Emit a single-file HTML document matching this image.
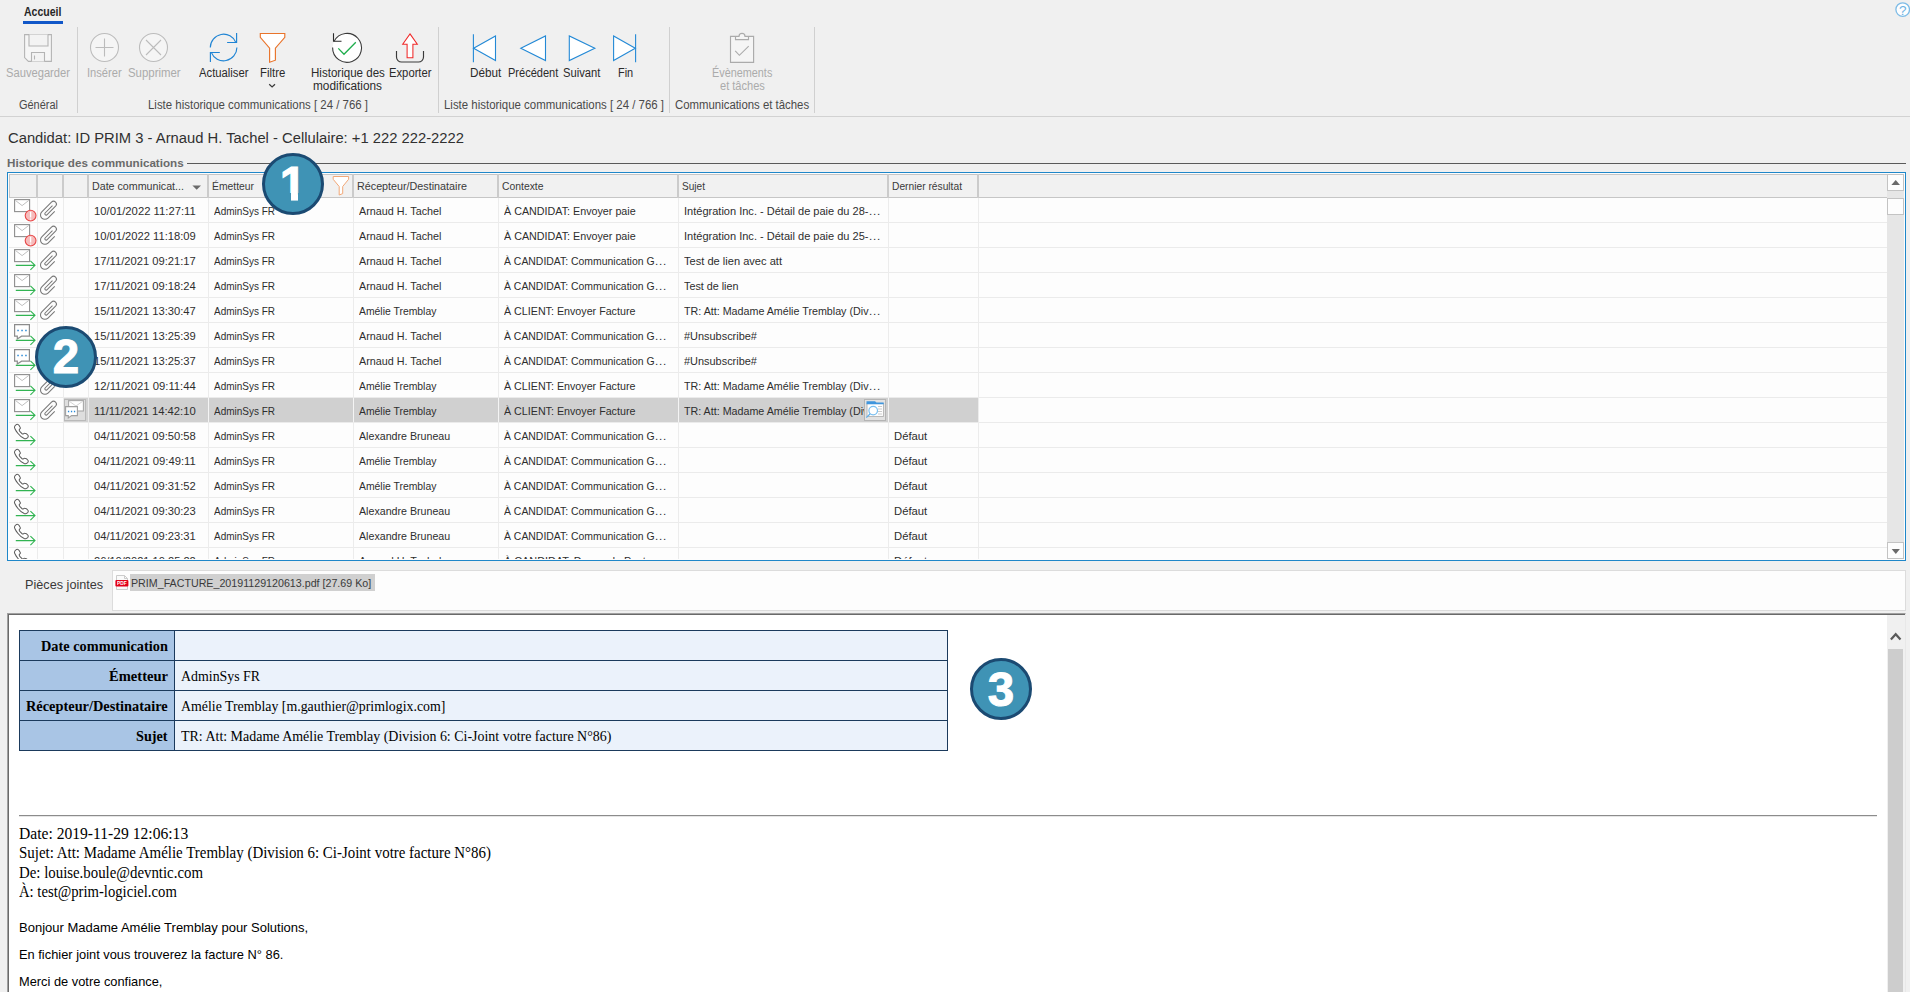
<!DOCTYPE html>
<html lang="fr"><head><meta charset="utf-8"><title>Historique des communications</title>
<style>
html,body{margin:0;padding:0}
body{width:1910px;height:992px;overflow:hidden;background:#f0f0f0;position:relative;font-family:"Liberation Sans",sans-serif}
.a{position:absolute;box-sizing:border-box}
.t{position:absolute;white-space:pre;line-height:normal;transform-origin:0 0}
</style></head><body>
<span class="t" style="left:23.90px;top:5.00px;font-family:'Liberation Sans', sans-serif;font-size:12px;color:#262626;font-weight:bold;transform:scaleX(0.8738);">Accueil</span>
<div class="a" style="left:23px;top:21px;width:40px;height:3px;background:#1157c8;"></div>
<svg class="a" style="left:1890px;top:0px;" width="20" height="20" viewBox="1890 0 20 20" fill="none"><circle cx="1902.7" cy="9.6" r="6.8" stroke="#7dbbe6" stroke-width="1.3" fill="#fdfeff"/></svg>
<span class="t" style="left:1899.04px;top:2.50px;font-family:'Liberation Sans', sans-serif;font-size:13.5px;color:#6db2e2;">?</span>
<div class="a" style="left:0px;top:116px;width:1910px;height:1px;background:#d2d2d2;"></div>
<div class="a" style="left:77px;top:27px;width:1px;height:86px;background:#d0d0d0;"></div>
<div class="a" style="left:438px;top:27px;width:1px;height:86px;background:#d0d0d0;"></div>
<div class="a" style="left:669px;top:27px;width:1px;height:86px;background:#d0d0d0;"></div>
<div class="a" style="left:814px;top:27px;width:1px;height:86px;background:#d0d0d0;"></div>
<svg class="a" style="left:22px;top:32px;" width="32" height="32" viewBox="22 32 32 32" fill="none"><g stroke="#b4b4b4" stroke-width="1.1" fill="#f6f6f6"><path d="M24.6 34.6H51.4V61.4H28.4L24.6 57.6Z"/><path d="M29 34.5V46H48V34.5" fill="#f3f3f3"/><path d="M31.5 61.5V52.5H44.5V61.5" fill="#f3f3f3"/><path d="M34.5 55.5V59.5"/></g></svg>
<span class="t" style="left:6.10px;top:66.00px;font-family:'Liberation Sans', sans-serif;font-size:12px;color:#ababab;transform:scaleX(0.9313);">Sauvegarder</span>
<span class="t" style="left:18.50px;top:98.00px;font-family:'Liberation Sans', sans-serif;font-size:12px;color:#4a4a4a;transform:scaleX(0.9133);">Général</span>
<svg class="a" style="left:88px;top:31px;" width="84" height="34" viewBox="88 31 84 34" fill="none"><g stroke="#bcbcbc" stroke-width="1.1" fill="#f5f5f5"><circle cx="104.5" cy="47.5" r="14"/><path d="M95.5 47.5H113.5M104.5 38.5V56.5"/><circle cx="153.5" cy="47.5" r="14"/><path d="M146 40L161 55M161 40L146 55"/></g></svg>
<span class="t" style="left:87.30px;top:66.00px;font-family:'Liberation Sans', sans-serif;font-size:12px;color:#ababab;transform:scaleX(0.9288);">Insérer</span>
<span class="t" style="left:128.40px;top:66.00px;font-family:'Liberation Sans', sans-serif;font-size:12px;color:#ababab;transform:scaleX(0.9502);">Supprimer</span>
<svg class="a" style="left:207px;top:31px;" width="34" height="34" viewBox="207 31 34 34" fill="none"><g stroke="#1f84d4" stroke-width="1.15"><path d="M210.3 47.5A13.3 13.3 0 0 1 235.96 42.6"/><path d="M236.6 32.9V42.5H227.1"/><path d="M236.9 47.5A13.3 13.3 0 0 1 211.24 52.4"/><path d="M210.4 61.9V52.5H219.8"/></g></svg>
<span class="t" style="left:199.30px;top:66.00px;font-family:'Liberation Sans', sans-serif;font-size:12px;color:#2b2b2b;transform:scaleX(0.9395);">Actualiser</span>
<svg class="a" style="left:258px;top:31px;" width="30" height="34" viewBox="258 31 30 34" fill="none"><path d="M260.3 33.5H284.8V37.3L275.4 48.1V60.2L269.6 62.3V48.1L260.3 37.3Z" stroke="#e9742b" stroke-width="1.15" fill="#fff"/></svg>
<span class="t" style="left:260.40px;top:66.00px;font-family:'Liberation Sans', sans-serif;font-size:12px;color:#2b2b2b;transform:scaleX(0.9486);">Filtre</span>
<svg class="a" style="left:267px;top:82px;" width="10" height="8" viewBox="267 82 10 8" fill="none"><path d="M269.2 84.2L272.1 87L275 84.2" stroke="#3a3a3a" stroke-width="1.25"/></svg>
<svg class="a" style="left:329px;top:31px;" width="36" height="34" viewBox="329 31 36 34" fill="none"><circle cx="347.05" cy="47.85" r="14.4" fill="#fff"/><path d="M334.17 41.3A14.45 14.45 0 1 1 332.6 47.6" stroke="#3a3a3a" stroke-width="1.1"/><path d="M333.5 33.3V41.3H341.5" stroke="#2a2a2a" stroke-width="1.1"/><path d="M338.3 48.4L344 54.3L355.8 42.3" stroke="#1fae4d" stroke-width="1.3"/></svg>
<span class="t" style="left:310.55px;top:66.00px;font-family:'Liberation Sans', sans-serif;font-size:12px;color:#2b2b2b;transform:scaleX(0.9633);">Historique des</span>
<span class="t" style="left:312.50px;top:79.00px;font-family:'Liberation Sans', sans-serif;font-size:12px;color:#2b2b2b;transform:scaleX(0.9853);">modifications</span>
<svg class="a" style="left:394px;top:31px;" width="32" height="34" viewBox="394 31 32 34" fill="none"><path d="M396.5 51V57a5 5 0 0 0 5 5h17a5 5 0 0 0 5-5V51" stroke="#3a3a3a" stroke-width="1.15"/><path d="M410 33.9L417.3 44.3H412.9V57.7H407.1V44.3H402.7Z" stroke="#f02828" stroke-width="1.05" fill="#fff"/></svg>
<span class="t" style="left:389.40px;top:66.00px;font-family:'Liberation Sans', sans-serif;font-size:12px;color:#2b2b2b;transform:scaleX(0.9370);">Exporter</span>
<span class="t" style="left:148.00px;top:98.00px;font-family:'Liberation Sans', sans-serif;font-size:12px;color:#4a4a4a;transform:scaleX(0.9532);">Liste historique communications [ 24 / 766 ]</span>
<svg class="a" style="left:470px;top:32px;" width="170" height="32" viewBox="470 32 170 32" fill="none"><g stroke="#2389d6" stroke-width="1.1" fill="#fff"><path d="M473.6 48.2L495.5 35.9V60.6Z"/><path d="M473.4 34.3V62.2"/><path d="M520.8 48.2L545.5 35.9V60.5Z"/><path d="M594.8 48.2L569.3 35.9V60.5Z"/><path d="M635.3 48.2L613.6 35.9V60.6Z"/><path d="M635.6 34.3V62.2"/></g></svg>
<span class="t" style="left:469.50px;top:66.00px;font-family:'Liberation Sans', sans-serif;font-size:12px;color:#2b2b2b;transform:scaleX(0.9772);">Début</span>
<span class="t" style="left:508.30px;top:66.00px;font-family:'Liberation Sans', sans-serif;font-size:12px;color:#2b2b2b;transform:scaleX(0.9195);">Précédent</span>
<span class="t" style="left:563.40px;top:66.00px;font-family:'Liberation Sans', sans-serif;font-size:12px;color:#2b2b2b;transform:scaleX(0.9343);">Suivant</span>
<span class="t" style="left:617.60px;top:66.00px;font-family:'Liberation Sans', sans-serif;font-size:12px;color:#2b2b2b;transform:scaleX(0.9117);">Fin</span>
<span class="t" style="left:444.30px;top:98.00px;font-family:'Liberation Sans', sans-serif;font-size:12px;color:#4a4a4a;transform:scaleX(0.9532);">Liste historique communications [ 24 / 766 ]</span>
<svg class="a" style="left:728px;top:31px;" width="28" height="34" viewBox="728 31 28 34" fill="none"><g stroke="#ababab" stroke-width="1.15" fill="#f5f5f5"><path d="M739 36.4H730.5V62.4H753.6V36.4H745A3 3 0 0 0 739 36.4Z"/><path d="M735.5 36.6V39.6H748.5V36.6" fill="none"/><path d="M735.2 50.9L739.4 55.3L748.7 46.2" fill="none"/></g></svg>
<span class="t" style="left:712.35px;top:66.00px;font-family:'Liberation Sans', sans-serif;font-size:12px;color:#ababab;transform:scaleX(0.9040);">Évènements</span>
<span class="t" style="left:719.55px;top:79.00px;font-family:'Liberation Sans', sans-serif;font-size:12px;color:#ababab;transform:scaleX(0.9219);">et tâches</span>
<span class="t" style="left:675.40px;top:98.00px;font-family:'Liberation Sans', sans-serif;font-size:12px;color:#4a4a4a;transform:scaleX(0.9483);">Communications et tâches</span>
<span class="t" style="left:7.80px;top:128.90px;font-family:'Liberation Sans', sans-serif;font-size:15.2px;color:#303030;transform:scaleX(0.9729);">Candidat: ID PRIM 3 - Arnaud H. Tachel - Cellulaire: +1 222 222-2222</span>
<span class="t" style="left:7.30px;top:155.70px;font-family:'Liberation Sans', sans-serif;font-size:11.6px;color:#6a6a6a;font-weight:bold;transform:scaleX(1.0047);">Historique des communications</span>
<div class="a" style="left:187px;top:163px;width:1719px;height:1px;background:#5a5a5a;"></div>
<div class="a" style="left:7px;top:172px;width:1899px;height:389px;background:#fdfdfd;border:1px solid #1f87c9;"></div>
<div class="a" style="left:9px;top:174px;width:1878px;height:24px;background:#f1f1f1;border:1px solid #c6c6c6;border-right:none;"></div>
<div class="a" style="left:36px;top:174px;width:2px;height:24px;background:#cbcbcb;"></div>
<div class="a" style="left:62px;top:174px;width:2px;height:24px;background:#cbcbcb;"></div>
<div class="a" style="left:87px;top:174px;width:2px;height:24px;background:#cbcbcb;"></div>
<div class="a" style="left:207px;top:174px;width:2px;height:24px;background:#cbcbcb;"></div>
<div class="a" style="left:351.8px;top:174px;width:2px;height:24px;background:#cbcbcb;"></div>
<div class="a" style="left:496.8px;top:174px;width:2px;height:24px;background:#cbcbcb;"></div>
<div class="a" style="left:676.5px;top:174px;width:2px;height:24px;background:#cbcbcb;"></div>
<div class="a" style="left:887px;top:174px;width:2px;height:24px;background:#cbcbcb;"></div>
<div class="a" style="left:977px;top:174px;width:2px;height:24px;background:#cbcbcb;"></div>
<span class="t" style="left:92.40px;top:180.00px;font-family:'Liberation Sans', sans-serif;font-size:11.5px;color:#3a3a3a;transform:scaleX(0.9286);">Date communicat...</span>
<svg class="a" style="left:190px;top:183px;" width="14" height="9" viewBox="190 183 14 9" fill="none"><path d="M192.4 185.4H201L196.7 189.8Z" fill="#6a6a6a"/></svg>
<span class="t" style="left:212.40px;top:180.00px;font-family:'Liberation Sans', sans-serif;font-size:11.5px;color:#3a3a3a;transform:scaleX(0.8999);">Émetteur</span>
<span class="t" style="left:357.00px;top:180.00px;font-family:'Liberation Sans', sans-serif;font-size:11.5px;color:#3a3a3a;transform:scaleX(0.9352);">Récepteur/Destinataire</span>
<span class="t" style="left:501.60px;top:180.00px;font-family:'Liberation Sans', sans-serif;font-size:11.5px;color:#3a3a3a;transform:scaleX(0.9016);">Contexte</span>
<span class="t" style="left:682.30px;top:180.00px;font-family:'Liberation Sans', sans-serif;font-size:11.5px;color:#3a3a3a;transform:scaleX(0.8772);">Sujet</span>
<span class="t" style="left:892.40px;top:180.00px;font-family:'Liberation Sans', sans-serif;font-size:11.5px;color:#3a3a3a;transform:scaleX(0.8903);">Dernier résultat</span>
<svg class="a" style="left:331px;top:175px;" width="20" height="22" viewBox="331 175 20 22" fill="none"><path d="M333.2 176.5H348.6V179.3L342.7 186.5V193.6L339.2 195V186.5L333.2 179.3Z" stroke="#f2a878" stroke-width="1" fill="#fff"/></svg>
<div class="a" style="left:89px;top:398px;width:889px;height:24px;background:#d0d0d0;"></div>
<div class="a" style="left:63px;top:398px;width:25px;height:24px;background:#d3d3d3;"></div>
<div class="a" style="left:9px;top:222px;width:1878px;height:1px;background:#ebebeb;"></div>
<div class="a" style="left:9px;top:247px;width:1878px;height:1px;background:#ebebeb;"></div>
<div class="a" style="left:9px;top:272px;width:1878px;height:1px;background:#ebebeb;"></div>
<div class="a" style="left:9px;top:297px;width:1878px;height:1px;background:#ebebeb;"></div>
<div class="a" style="left:9px;top:322px;width:1878px;height:1px;background:#ebebeb;"></div>
<div class="a" style="left:9px;top:347px;width:1878px;height:1px;background:#ebebeb;"></div>
<div class="a" style="left:9px;top:372px;width:1878px;height:1px;background:#ebebeb;"></div>
<div class="a" style="left:9px;top:397px;width:1878px;height:1px;background:#ebebeb;"></div>
<div class="a" style="left:9px;top:422px;width:1878px;height:1px;background:#ebebeb;"></div>
<div class="a" style="left:9px;top:447px;width:1878px;height:1px;background:#ebebeb;"></div>
<div class="a" style="left:9px;top:472px;width:1878px;height:1px;background:#ebebeb;"></div>
<div class="a" style="left:9px;top:497px;width:1878px;height:1px;background:#ebebeb;"></div>
<div class="a" style="left:9px;top:522px;width:1878px;height:1px;background:#ebebeb;"></div>
<div class="a" style="left:9px;top:547px;width:1878px;height:1px;background:#ebebeb;"></div>
<div class="a" style="left:37px;top:198px;width:1px;height:362px;background:#ececec;"></div>
<div class="a" style="left:63px;top:198px;width:1px;height:362px;background:#ececec;"></div>
<div class="a" style="left:88px;top:198px;width:1px;height:362px;background:#ececec;"></div>
<div class="a" style="left:208px;top:198px;width:1px;height:362px;background:#ececec;"></div>
<div class="a" style="left:353px;top:198px;width:1px;height:362px;background:#ececec;"></div>
<div class="a" style="left:498px;top:198px;width:1px;height:362px;background:#ececec;"></div>
<div class="a" style="left:678px;top:198px;width:1px;height:362px;background:#ececec;"></div>
<div class="a" style="left:888px;top:198px;width:1px;height:362px;background:#ececec;"></div>
<div class="a" style="left:978px;top:198px;width:1px;height:362px;background:#ececec;"></div>
<div class="a" style="left:208px;top:398px;width:1px;height:24px;background:#f4f4f4;"></div>
<div class="a" style="left:353px;top:398px;width:1px;height:24px;background:#f4f4f4;"></div>
<div class="a" style="left:498px;top:398px;width:1px;height:24px;background:#f4f4f4;"></div>
<div class="a" style="left:678px;top:398px;width:1px;height:24px;background:#f4f4f4;"></div>
<div class="a" style="left:888px;top:398px;width:1px;height:24px;background:#f4f4f4;"></div>
<svg class="a" style="left:9px;top:198px;overflow:hidden;" width="80" height="361" viewBox="9 198 80 361" fill="none"><rect x="14.6" y="199.6" width="15" height="12" stroke="#8e8e8e" stroke-width="1.1" fill="#fff"/><path d="M15.4 200.4L22.1 205.6L28.799999999999997 200.4" stroke="#c0c0c0" stroke-width="1"/><circle cx="30.6" cy="215.6" r="5.4" fill="#f6bcbc" stroke="#e84848" stroke-width="1.1"/><path d="M30.6 211.7V217.5M30.6 218.6V219.7" stroke="#fff" stroke-width="1.3"/><g transform="translate(44.9 214.9) rotate(-45)"><path d="M9.5 4.4H0A4.4 4.4 0 0 1 0 -4.4H13.7A2.875 2.875 0 0 1 13.7 1.35H1.5A1.28 1.28 0 0 1 1.5 -1.2H11.9" stroke="#787878" stroke-width="1.05" fill="none"/></g><rect x="14.6" y="224.6" width="15" height="12" stroke="#8e8e8e" stroke-width="1.1" fill="#fff"/><path d="M15.4 225.4L22.1 230.6L28.799999999999997 225.4" stroke="#c0c0c0" stroke-width="1"/><circle cx="30.6" cy="240.6" r="5.4" fill="#f6bcbc" stroke="#e84848" stroke-width="1.1"/><path d="M30.6 236.7V242.5M30.6 243.6V244.7" stroke="#fff" stroke-width="1.3"/><g transform="translate(44.9 239.9) rotate(-45)"><path d="M9.5 4.4H0A4.4 4.4 0 0 1 0 -4.4H13.7A2.875 2.875 0 0 1 13.7 1.35H1.5A1.28 1.28 0 0 1 1.5 -1.2H11.9" stroke="#787878" stroke-width="1.05" fill="none"/></g><rect x="14.6" y="249.6" width="15" height="12" stroke="#8e8e8e" stroke-width="1.1" fill="#fff"/><path d="M15.4 250.4L22.1 255.6L28.799999999999997 250.4" stroke="#c0c0c0" stroke-width="1"/><path d="M15.8 265.35H34.8M30.4 260.85L35 265.35L30.4 269.85" stroke="#31b452" stroke-width="1.1"/><g transform="translate(44.9 264.9) rotate(-45)"><path d="M9.5 4.4H0A4.4 4.4 0 0 1 0 -4.4H13.7A2.875 2.875 0 0 1 13.7 1.35H1.5A1.28 1.28 0 0 1 1.5 -1.2H11.9" stroke="#787878" stroke-width="1.05" fill="none"/></g><rect x="14.6" y="274.6" width="15" height="12" stroke="#8e8e8e" stroke-width="1.1" fill="#fff"/><path d="M15.4 275.40000000000003L22.1 280.6L28.799999999999997 275.40000000000003" stroke="#c0c0c0" stroke-width="1"/><path d="M15.8 290.35H34.8M30.4 285.85L35 290.35L30.4 294.85" stroke="#31b452" stroke-width="1.1"/><g transform="translate(44.9 289.9) rotate(-45)"><path d="M9.5 4.4H0A4.4 4.4 0 0 1 0 -4.4H13.7A2.875 2.875 0 0 1 13.7 1.35H1.5A1.28 1.28 0 0 1 1.5 -1.2H11.9" stroke="#787878" stroke-width="1.05" fill="none"/></g><rect x="14.6" y="299.6" width="15" height="12" stroke="#8e8e8e" stroke-width="1.1" fill="#fff"/><path d="M15.4 300.40000000000003L22.1 305.6L28.799999999999997 300.40000000000003" stroke="#c0c0c0" stroke-width="1"/><path d="M15.8 315.35H34.8M30.4 310.85L35 315.35L30.4 319.85" stroke="#31b452" stroke-width="1.1"/><g transform="translate(44.9 314.9) rotate(-45)"><path d="M9.5 4.4H0A4.4 4.4 0 0 1 0 -4.4H13.7A2.875 2.875 0 0 1 13.7 1.35H1.5A1.28 1.28 0 0 1 1.5 -1.2H11.9" stroke="#787878" stroke-width="1.05" fill="none"/></g><path d="M14.6 324.6H29.4V336.20000000000005H21.6L17.3 339.0V336.20000000000005H14.6Z" stroke="#8c8c8c" stroke-width="1.2" fill="#fff"/><path d="M17.3 330.5h1.5M21.3 330.5h1.5M25.2 330.5h1.5" stroke="#2b8ad8" stroke-width="1.5"/><path d="M15.8 340.35H34.8M30.4 335.85L35 340.35L30.4 344.85" stroke="#31b452" stroke-width="1.1"/><path d="M14.6 349.6H29.4V361.20000000000005H21.6L17.3 364.0V361.20000000000005H14.6Z" stroke="#8c8c8c" stroke-width="1.2" fill="#fff"/><path d="M17.3 355.5h1.5M21.3 355.5h1.5M25.2 355.5h1.5" stroke="#2b8ad8" stroke-width="1.5"/><path d="M15.8 365.35H34.8M30.4 360.85L35 365.35L30.4 369.85" stroke="#31b452" stroke-width="1.1"/><rect x="14.6" y="374.6" width="15" height="12" stroke="#8e8e8e" stroke-width="1.1" fill="#fff"/><path d="M15.4 375.40000000000003L22.1 380.6L28.799999999999997 375.40000000000003" stroke="#c0c0c0" stroke-width="1"/><path d="M15.8 390.35H34.8M30.4 385.85L35 390.35L30.4 394.85" stroke="#31b452" stroke-width="1.1"/><g transform="translate(44.9 389.9) rotate(-45)"><path d="M9.5 4.4H0A4.4 4.4 0 0 1 0 -4.4H13.7A2.875 2.875 0 0 1 13.7 1.35H1.5A1.28 1.28 0 0 1 1.5 -1.2H11.9" stroke="#787878" stroke-width="1.05" fill="none"/></g><rect x="14.6" y="399.6" width="15" height="12" stroke="#8e8e8e" stroke-width="1.1" fill="#fff"/><path d="M15.4 400.40000000000003L22.1 405.6L28.799999999999997 400.40000000000003" stroke="#c0c0c0" stroke-width="1"/><path d="M15.8 415.35H34.8M30.4 410.85L35 415.35L30.4 419.85" stroke="#31b452" stroke-width="1.1"/><g transform="translate(44.9 414.9) rotate(-45)"><path d="M9.5 4.4H0A4.4 4.4 0 0 1 0 -4.4H13.7A2.875 2.875 0 0 1 13.7 1.35H1.5A1.28 1.28 0 0 1 1.5 -1.2H11.9" stroke="#787878" stroke-width="1.05" fill="none"/></g><g transform="translate(0 0)"><path d="M17.3 424.3C18.1 424.3 18.7 424.9 19.1 425.6C19.6 426.5 20.5 427.4 20.4 428.1C20.3 428.7 19.5 428.9 19.3 429.5C19.1 430.2 19.3 430.7 19.8 431.3L22.2 433.8C22.6 434.2 23 434.1 23.4 433.8C23.8 433.4 24.2 433.1 24.8 433.2C25.6 433.3 26.3 433.7 26.9 434.2C27.6 434.8 28.4 435.4 28.3 436.2C28.2 437.3 27.2 438.2 26.2 438.6C25.5 438.9 24.8 438.9 24.2 438.6C22 437.7 19.6 435.6 17.8 433.3C16.6 431.8 15.7 430.4 15.2 429.3C14.7 428.3 14.3 427.6 14.5 426.9C14.7 426 15.2 425.4 15.6 425.1C16.1 424.7 16.6 424.3 17.3 424.3Z" stroke="#5c5c5c" stroke-width="1.05" fill="#fff"/></g><path d="M15.8 440.62H34.8M30.4 436.12L35 440.62L30.4 445.12" stroke="#31b452" stroke-width="1.1"/><g transform="translate(0 25)"><path d="M17.3 424.3C18.1 424.3 18.7 424.9 19.1 425.6C19.6 426.5 20.5 427.4 20.4 428.1C20.3 428.7 19.5 428.9 19.3 429.5C19.1 430.2 19.3 430.7 19.8 431.3L22.2 433.8C22.6 434.2 23 434.1 23.4 433.8C23.8 433.4 24.2 433.1 24.8 433.2C25.6 433.3 26.3 433.7 26.9 434.2C27.6 434.8 28.4 435.4 28.3 436.2C28.2 437.3 27.2 438.2 26.2 438.6C25.5 438.9 24.8 438.9 24.2 438.6C22 437.7 19.6 435.6 17.8 433.3C16.6 431.8 15.7 430.4 15.2 429.3C14.7 428.3 14.3 427.6 14.5 426.9C14.7 426 15.2 425.4 15.6 425.1C16.1 424.7 16.6 424.3 17.3 424.3Z" stroke="#5c5c5c" stroke-width="1.05" fill="#fff"/></g><path d="M15.8 465.62H34.8M30.4 461.12L35 465.62L30.4 470.12" stroke="#31b452" stroke-width="1.1"/><g transform="translate(0 50)"><path d="M17.3 424.3C18.1 424.3 18.7 424.9 19.1 425.6C19.6 426.5 20.5 427.4 20.4 428.1C20.3 428.7 19.5 428.9 19.3 429.5C19.1 430.2 19.3 430.7 19.8 431.3L22.2 433.8C22.6 434.2 23 434.1 23.4 433.8C23.8 433.4 24.2 433.1 24.8 433.2C25.6 433.3 26.3 433.7 26.9 434.2C27.6 434.8 28.4 435.4 28.3 436.2C28.2 437.3 27.2 438.2 26.2 438.6C25.5 438.9 24.8 438.9 24.2 438.6C22 437.7 19.6 435.6 17.8 433.3C16.6 431.8 15.7 430.4 15.2 429.3C14.7 428.3 14.3 427.6 14.5 426.9C14.7 426 15.2 425.4 15.6 425.1C16.1 424.7 16.6 424.3 17.3 424.3Z" stroke="#5c5c5c" stroke-width="1.05" fill="#fff"/></g><path d="M15.8 490.62H34.8M30.4 486.12L35 490.62L30.4 495.12" stroke="#31b452" stroke-width="1.1"/><g transform="translate(0 75)"><path d="M17.3 424.3C18.1 424.3 18.7 424.9 19.1 425.6C19.6 426.5 20.5 427.4 20.4 428.1C20.3 428.7 19.5 428.9 19.3 429.5C19.1 430.2 19.3 430.7 19.8 431.3L22.2 433.8C22.6 434.2 23 434.1 23.4 433.8C23.8 433.4 24.2 433.1 24.8 433.2C25.6 433.3 26.3 433.7 26.9 434.2C27.6 434.8 28.4 435.4 28.3 436.2C28.2 437.3 27.2 438.2 26.2 438.6C25.5 438.9 24.8 438.9 24.2 438.6C22 437.7 19.6 435.6 17.8 433.3C16.6 431.8 15.7 430.4 15.2 429.3C14.7 428.3 14.3 427.6 14.5 426.9C14.7 426 15.2 425.4 15.6 425.1C16.1 424.7 16.6 424.3 17.3 424.3Z" stroke="#5c5c5c" stroke-width="1.05" fill="#fff"/></g><path d="M15.8 515.62H34.8M30.4 511.12L35 515.62L30.4 520.12" stroke="#31b452" stroke-width="1.1"/><g transform="translate(0 100)"><path d="M17.3 424.3C18.1 424.3 18.7 424.9 19.1 425.6C19.6 426.5 20.5 427.4 20.4 428.1C20.3 428.7 19.5 428.9 19.3 429.5C19.1 430.2 19.3 430.7 19.8 431.3L22.2 433.8C22.6 434.2 23 434.1 23.4 433.8C23.8 433.4 24.2 433.1 24.8 433.2C25.6 433.3 26.3 433.7 26.9 434.2C27.6 434.8 28.4 435.4 28.3 436.2C28.2 437.3 27.2 438.2 26.2 438.6C25.5 438.9 24.8 438.9 24.2 438.6C22 437.7 19.6 435.6 17.8 433.3C16.6 431.8 15.7 430.4 15.2 429.3C14.7 428.3 14.3 427.6 14.5 426.9C14.7 426 15.2 425.4 15.6 425.1C16.1 424.7 16.6 424.3 17.3 424.3Z" stroke="#5c5c5c" stroke-width="1.05" fill="#fff"/></g><path d="M15.8 540.62H34.8M30.4 536.12L35 540.62L30.4 545.12" stroke="#31b452" stroke-width="1.1"/><g transform="translate(0 125)"><path d="M17.3 424.3C18.1 424.3 18.7 424.9 19.1 425.6C19.6 426.5 20.5 427.4 20.4 428.1C20.3 428.7 19.5 428.9 19.3 429.5C19.1 430.2 19.3 430.7 19.8 431.3L22.2 433.8C22.6 434.2 23 434.1 23.4 433.8C23.8 433.4 24.2 433.1 24.8 433.2C25.6 433.3 26.3 433.7 26.9 434.2C27.6 434.8 28.4 435.4 28.3 436.2C28.2 437.3 27.2 438.2 26.2 438.6C25.5 438.9 24.8 438.9 24.2 438.6C22 437.7 19.6 435.6 17.8 433.3C16.6 431.8 15.7 430.4 15.2 429.3C14.7 428.3 14.3 427.6 14.5 426.9C14.7 426 15.2 425.4 15.6 425.1C16.1 424.7 16.6 424.3 17.3 424.3Z" stroke="#5c5c5c" stroke-width="1.05" fill="#fff"/></g><path d="M15.8 565.62H34.8M30.4 561.12L35 565.62L30.4 570.12" stroke="#31b452" stroke-width="1.1"/></svg>
<div class="a" style="left:64px;top:399px;width:22px;height:22px;background:#dedede;border:1px solid #b9b9b9;"></div>
<svg class="a" style="left:64px;top:399px;" width="22" height="22" viewBox="64 399 22 22" fill="none"><rect x="68.6" y="400.6" width="14.8" height="10.4" stroke="#a8a8a8" stroke-width="1.1" fill="#fff"/><path d="M69.3 401.3L76 406L82.7 401.3" stroke="#cfcfcf" stroke-width="0.9"/><path d="M65.6 406.6H77.4V415.6H71.6L68.3 418V415.6H65.6Z" stroke="#a0a0a0" stroke-width="1.1" fill="#fff"/><path d="M67.9 411.5h1.3M70.9 411.5h1.3M73.9 411.5h1.3" stroke="#2b8ad8" stroke-width="1.4"/></svg>
<span class="t" style="left:93.90px;top:205.00px;font-family:'Liberation Sans', sans-serif;font-size:11.5px;color:#2e2e2e;transform:scaleX(0.9806);">10/01/2022 11:27:11</span>
<span class="t" style="left:213.80px;top:205.00px;font-family:'Liberation Sans', sans-serif;font-size:11.5px;color:#2e2e2e;transform:scaleX(0.8677);">AdminSys FR</span>
<span class="t" style="left:358.80px;top:205.00px;font-family:'Liberation Sans', sans-serif;font-size:11.5px;color:#2e2e2e;transform:scaleX(0.9362);">Arnaud H. Tachel</span>
<span class="t" style="left:503.60px;top:205.00px;font-family:'Liberation Sans', sans-serif;font-size:11.5px;color:#2e2e2e;transform:scaleX(0.9337);">À CANDIDAT: Envoyer paie</span>
<span class="t" style="left:683.60px;top:205.00px;font-family:'Liberation Sans', sans-serif;font-size:11.5px;color:#2e2e2e;transform:scaleX(0.9588);">Intégration Inc. - Détail de paie du 28-</span>
<span class="t" style="left:869.00px;top:205.00px;font-family:'Liberation Sans', sans-serif;font-size:11.5px;color:#2e2e2e;letter-spacing:0.8px;">...</span>
<span class="t" style="left:93.90px;top:230.00px;font-family:'Liberation Sans', sans-serif;font-size:11.5px;color:#2e2e2e;transform:scaleX(0.9726);">10/01/2022 11:18:09</span>
<span class="t" style="left:213.80px;top:230.00px;font-family:'Liberation Sans', sans-serif;font-size:11.5px;color:#2e2e2e;transform:scaleX(0.8677);">AdminSys FR</span>
<span class="t" style="left:358.80px;top:230.00px;font-family:'Liberation Sans', sans-serif;font-size:11.5px;color:#2e2e2e;transform:scaleX(0.9362);">Arnaud H. Tachel</span>
<span class="t" style="left:503.60px;top:230.00px;font-family:'Liberation Sans', sans-serif;font-size:11.5px;color:#2e2e2e;transform:scaleX(0.9337);">À CANDIDAT: Envoyer paie</span>
<span class="t" style="left:683.60px;top:230.00px;font-family:'Liberation Sans', sans-serif;font-size:11.5px;color:#2e2e2e;transform:scaleX(0.9588);">Intégration Inc. - Détail de paie du 25-</span>
<span class="t" style="left:869.00px;top:230.00px;font-family:'Liberation Sans', sans-serif;font-size:11.5px;color:#2e2e2e;letter-spacing:0.8px;">...</span>
<span class="t" style="left:93.90px;top:255.00px;font-family:'Liberation Sans', sans-serif;font-size:11.5px;color:#2e2e2e;transform:scaleX(0.9726);">17/11/2021 09:21:17</span>
<span class="t" style="left:213.80px;top:255.00px;font-family:'Liberation Sans', sans-serif;font-size:11.5px;color:#2e2e2e;transform:scaleX(0.8677);">AdminSys FR</span>
<span class="t" style="left:358.80px;top:255.00px;font-family:'Liberation Sans', sans-serif;font-size:11.5px;color:#2e2e2e;transform:scaleX(0.9362);">Arnaud H. Tachel</span>
<span class="t" style="left:503.60px;top:255.00px;font-family:'Liberation Sans', sans-serif;font-size:11.5px;color:#2e2e2e;transform:scaleX(0.9069);">À CANDIDAT: Communication G</span>
<span class="t" style="left:655.00px;top:255.00px;font-family:'Liberation Sans', sans-serif;font-size:11.5px;color:#2e2e2e;letter-spacing:0.8px;">...</span>
<span class="t" style="left:683.60px;top:255.00px;font-family:'Liberation Sans', sans-serif;font-size:11.5px;color:#2e2e2e;transform:scaleX(0.9640);">Test de lien avec att</span>
<span class="t" style="left:93.90px;top:280.00px;font-family:'Liberation Sans', sans-serif;font-size:11.5px;color:#2e2e2e;transform:scaleX(0.9726);">17/11/2021 09:18:24</span>
<span class="t" style="left:213.80px;top:280.00px;font-family:'Liberation Sans', sans-serif;font-size:11.5px;color:#2e2e2e;transform:scaleX(0.8677);">AdminSys FR</span>
<span class="t" style="left:358.80px;top:280.00px;font-family:'Liberation Sans', sans-serif;font-size:11.5px;color:#2e2e2e;transform:scaleX(0.9362);">Arnaud H. Tachel</span>
<span class="t" style="left:503.60px;top:280.00px;font-family:'Liberation Sans', sans-serif;font-size:11.5px;color:#2e2e2e;transform:scaleX(0.9069);">À CANDIDAT: Communication G</span>
<span class="t" style="left:655.00px;top:280.00px;font-family:'Liberation Sans', sans-serif;font-size:11.5px;color:#2e2e2e;letter-spacing:0.8px;">...</span>
<span class="t" style="left:683.60px;top:280.00px;font-family:'Liberation Sans', sans-serif;font-size:11.5px;color:#2e2e2e;transform:scaleX(0.9366);">Test de lien</span>
<span class="t" style="left:93.90px;top:305.00px;font-family:'Liberation Sans', sans-serif;font-size:11.5px;color:#2e2e2e;transform:scaleX(0.9726);">15/11/2021 13:30:47</span>
<span class="t" style="left:213.80px;top:305.00px;font-family:'Liberation Sans', sans-serif;font-size:11.5px;color:#2e2e2e;transform:scaleX(0.8677);">AdminSys FR</span>
<span class="t" style="left:358.80px;top:305.00px;font-family:'Liberation Sans', sans-serif;font-size:11.5px;color:#2e2e2e;transform:scaleX(0.9038);">Amélie Tremblay</span>
<span class="t" style="left:503.60px;top:305.00px;font-family:'Liberation Sans', sans-serif;font-size:11.5px;color:#2e2e2e;transform:scaleX(0.9303);">À CLIENT: Envoyer Facture</span>
<span class="t" style="left:683.60px;top:305.00px;font-family:'Liberation Sans', sans-serif;font-size:11.5px;color:#2e2e2e;transform:scaleX(0.9312);">TR: Att: Madame Amélie Tremblay (Div</span>
<span class="t" style="left:869.00px;top:305.00px;font-family:'Liberation Sans', sans-serif;font-size:11.5px;color:#2e2e2e;letter-spacing:0.8px;">...</span>
<span class="t" style="left:93.90px;top:330.00px;font-family:'Liberation Sans', sans-serif;font-size:11.5px;color:#2e2e2e;transform:scaleX(0.9726);">15/11/2021 13:25:39</span>
<span class="t" style="left:213.80px;top:330.00px;font-family:'Liberation Sans', sans-serif;font-size:11.5px;color:#2e2e2e;transform:scaleX(0.8677);">AdminSys FR</span>
<span class="t" style="left:358.80px;top:330.00px;font-family:'Liberation Sans', sans-serif;font-size:11.5px;color:#2e2e2e;transform:scaleX(0.9362);">Arnaud H. Tachel</span>
<span class="t" style="left:503.60px;top:330.00px;font-family:'Liberation Sans', sans-serif;font-size:11.5px;color:#2e2e2e;transform:scaleX(0.9069);">À CANDIDAT: Communication G</span>
<span class="t" style="left:655.00px;top:330.00px;font-family:'Liberation Sans', sans-serif;font-size:11.5px;color:#2e2e2e;letter-spacing:0.8px;">...</span>
<span class="t" style="left:683.60px;top:330.00px;font-family:'Liberation Sans', sans-serif;font-size:11.5px;color:#2e2e2e;transform:scaleX(0.9502);">#Unsubscribe#</span>
<span class="t" style="left:93.90px;top:355.00px;font-family:'Liberation Sans', sans-serif;font-size:11.5px;color:#2e2e2e;transform:scaleX(0.9726);">15/11/2021 13:25:37</span>
<span class="t" style="left:213.80px;top:355.00px;font-family:'Liberation Sans', sans-serif;font-size:11.5px;color:#2e2e2e;transform:scaleX(0.8677);">AdminSys FR</span>
<span class="t" style="left:358.80px;top:355.00px;font-family:'Liberation Sans', sans-serif;font-size:11.5px;color:#2e2e2e;transform:scaleX(0.9362);">Arnaud H. Tachel</span>
<span class="t" style="left:503.60px;top:355.00px;font-family:'Liberation Sans', sans-serif;font-size:11.5px;color:#2e2e2e;transform:scaleX(0.9069);">À CANDIDAT: Communication G</span>
<span class="t" style="left:655.00px;top:355.00px;font-family:'Liberation Sans', sans-serif;font-size:11.5px;color:#2e2e2e;letter-spacing:0.8px;">...</span>
<span class="t" style="left:683.60px;top:355.00px;font-family:'Liberation Sans', sans-serif;font-size:11.5px;color:#2e2e2e;transform:scaleX(0.9502);">#Unsubscribe#</span>
<span class="t" style="left:93.90px;top:380.00px;font-family:'Liberation Sans', sans-serif;font-size:11.5px;color:#2e2e2e;transform:scaleX(0.9806);">12/11/2021 09:11:44</span>
<span class="t" style="left:213.80px;top:380.00px;font-family:'Liberation Sans', sans-serif;font-size:11.5px;color:#2e2e2e;transform:scaleX(0.8677);">AdminSys FR</span>
<span class="t" style="left:358.80px;top:380.00px;font-family:'Liberation Sans', sans-serif;font-size:11.5px;color:#2e2e2e;transform:scaleX(0.9038);">Amélie Tremblay</span>
<span class="t" style="left:503.60px;top:380.00px;font-family:'Liberation Sans', sans-serif;font-size:11.5px;color:#2e2e2e;transform:scaleX(0.9303);">À CLIENT: Envoyer Facture</span>
<span class="t" style="left:683.60px;top:380.00px;font-family:'Liberation Sans', sans-serif;font-size:11.5px;color:#2e2e2e;transform:scaleX(0.9312);">TR: Att: Madame Amélie Tremblay (Div</span>
<span class="t" style="left:869.00px;top:380.00px;font-family:'Liberation Sans', sans-serif;font-size:11.5px;color:#2e2e2e;letter-spacing:0.8px;">...</span>
<span class="t" style="left:93.90px;top:405.00px;font-family:'Liberation Sans', sans-serif;font-size:11.5px;color:#2e2e2e;transform:scaleX(0.9806);">11/11/2021 14:42:10</span>
<span class="t" style="left:213.80px;top:405.00px;font-family:'Liberation Sans', sans-serif;font-size:11.5px;color:#2e2e2e;transform:scaleX(0.8677);">AdminSys FR</span>
<span class="t" style="left:358.80px;top:405.00px;font-family:'Liberation Sans', sans-serif;font-size:11.5px;color:#2e2e2e;transform:scaleX(0.9038);">Amélie Tremblay</span>
<span class="t" style="left:503.60px;top:405.00px;font-family:'Liberation Sans', sans-serif;font-size:11.5px;color:#2e2e2e;transform:scaleX(0.9303);">À CLIENT: Envoyer Facture</span>
<span class="t" style="left:683.60px;top:405.00px;font-family:'Liberation Sans', sans-serif;font-size:11.5px;color:#2e2e2e;transform:scaleX(0.9307);width:193.6px;overflow:hidden;">TR: Att: Madame Amélie Tremblay (Div</span>
<span class="t" style="left:93.90px;top:430.00px;font-family:'Liberation Sans', sans-serif;font-size:11.5px;color:#2e2e2e;transform:scaleX(0.9726);">04/11/2021 09:50:58</span>
<span class="t" style="left:213.80px;top:430.00px;font-family:'Liberation Sans', sans-serif;font-size:11.5px;color:#2e2e2e;transform:scaleX(0.8677);">AdminSys FR</span>
<span class="t" style="left:358.80px;top:430.00px;font-family:'Liberation Sans', sans-serif;font-size:11.5px;color:#2e2e2e;transform:scaleX(0.9262);">Alexandre Bruneau</span>
<span class="t" style="left:503.60px;top:430.00px;font-family:'Liberation Sans', sans-serif;font-size:11.5px;color:#2e2e2e;transform:scaleX(0.9069);">À CANDIDAT: Communication G</span>
<span class="t" style="left:655.00px;top:430.00px;font-family:'Liberation Sans', sans-serif;font-size:11.5px;color:#2e2e2e;letter-spacing:0.8px;">...</span>
<span class="t" style="left:893.50px;top:430.00px;font-family:'Liberation Sans', sans-serif;font-size:11.5px;color:#2e2e2e;transform:scaleX(0.9796);">Défaut</span>
<span class="t" style="left:93.90px;top:455.00px;font-family:'Liberation Sans', sans-serif;font-size:11.5px;color:#2e2e2e;transform:scaleX(0.9806);">04/11/2021 09:49:11</span>
<span class="t" style="left:213.80px;top:455.00px;font-family:'Liberation Sans', sans-serif;font-size:11.5px;color:#2e2e2e;transform:scaleX(0.8677);">AdminSys FR</span>
<span class="t" style="left:358.80px;top:455.00px;font-family:'Liberation Sans', sans-serif;font-size:11.5px;color:#2e2e2e;transform:scaleX(0.9038);">Amélie Tremblay</span>
<span class="t" style="left:503.60px;top:455.00px;font-family:'Liberation Sans', sans-serif;font-size:11.5px;color:#2e2e2e;transform:scaleX(0.9069);">À CANDIDAT: Communication G</span>
<span class="t" style="left:655.00px;top:455.00px;font-family:'Liberation Sans', sans-serif;font-size:11.5px;color:#2e2e2e;letter-spacing:0.8px;">...</span>
<span class="t" style="left:893.50px;top:455.00px;font-family:'Liberation Sans', sans-serif;font-size:11.5px;color:#2e2e2e;transform:scaleX(0.9796);">Défaut</span>
<span class="t" style="left:93.90px;top:480.00px;font-family:'Liberation Sans', sans-serif;font-size:11.5px;color:#2e2e2e;transform:scaleX(0.9726);">04/11/2021 09:31:52</span>
<span class="t" style="left:213.80px;top:480.00px;font-family:'Liberation Sans', sans-serif;font-size:11.5px;color:#2e2e2e;transform:scaleX(0.8677);">AdminSys FR</span>
<span class="t" style="left:358.80px;top:480.00px;font-family:'Liberation Sans', sans-serif;font-size:11.5px;color:#2e2e2e;transform:scaleX(0.9038);">Amélie Tremblay</span>
<span class="t" style="left:503.60px;top:480.00px;font-family:'Liberation Sans', sans-serif;font-size:11.5px;color:#2e2e2e;transform:scaleX(0.9069);">À CANDIDAT: Communication G</span>
<span class="t" style="left:655.00px;top:480.00px;font-family:'Liberation Sans', sans-serif;font-size:11.5px;color:#2e2e2e;letter-spacing:0.8px;">...</span>
<span class="t" style="left:893.50px;top:480.00px;font-family:'Liberation Sans', sans-serif;font-size:11.5px;color:#2e2e2e;transform:scaleX(0.9796);">Défaut</span>
<span class="t" style="left:93.90px;top:505.00px;font-family:'Liberation Sans', sans-serif;font-size:11.5px;color:#2e2e2e;transform:scaleX(0.9726);">04/11/2021 09:30:23</span>
<span class="t" style="left:213.80px;top:505.00px;font-family:'Liberation Sans', sans-serif;font-size:11.5px;color:#2e2e2e;transform:scaleX(0.8677);">AdminSys FR</span>
<span class="t" style="left:358.80px;top:505.00px;font-family:'Liberation Sans', sans-serif;font-size:11.5px;color:#2e2e2e;transform:scaleX(0.9262);">Alexandre Bruneau</span>
<span class="t" style="left:503.60px;top:505.00px;font-family:'Liberation Sans', sans-serif;font-size:11.5px;color:#2e2e2e;transform:scaleX(0.9069);">À CANDIDAT: Communication G</span>
<span class="t" style="left:655.00px;top:505.00px;font-family:'Liberation Sans', sans-serif;font-size:11.5px;color:#2e2e2e;letter-spacing:0.8px;">...</span>
<span class="t" style="left:893.50px;top:505.00px;font-family:'Liberation Sans', sans-serif;font-size:11.5px;color:#2e2e2e;transform:scaleX(0.9796);">Défaut</span>
<span class="t" style="left:93.90px;top:530.00px;font-family:'Liberation Sans', sans-serif;font-size:11.5px;color:#2e2e2e;transform:scaleX(0.9726);">04/11/2021 09:23:31</span>
<span class="t" style="left:213.80px;top:530.00px;font-family:'Liberation Sans', sans-serif;font-size:11.5px;color:#2e2e2e;transform:scaleX(0.8677);">AdminSys FR</span>
<span class="t" style="left:358.80px;top:530.00px;font-family:'Liberation Sans', sans-serif;font-size:11.5px;color:#2e2e2e;transform:scaleX(0.9262);">Alexandre Bruneau</span>
<span class="t" style="left:503.60px;top:530.00px;font-family:'Liberation Sans', sans-serif;font-size:11.5px;color:#2e2e2e;transform:scaleX(0.9069);">À CANDIDAT: Communication G</span>
<span class="t" style="left:655.00px;top:530.00px;font-family:'Liberation Sans', sans-serif;font-size:11.5px;color:#2e2e2e;letter-spacing:0.8px;">...</span>
<span class="t" style="left:893.50px;top:530.00px;font-family:'Liberation Sans', sans-serif;font-size:11.5px;color:#2e2e2e;transform:scaleX(0.9796);">Défaut</span>
<span class="t" style="left:93.90px;top:555.00px;font-family:'Liberation Sans', sans-serif;font-size:11.5px;color:#2e2e2e;transform:scaleX(0.9646);">26/10/2021 10:25:22</span>
<span class="t" style="left:213.80px;top:555.00px;font-family:'Liberation Sans', sans-serif;font-size:11.5px;color:#2e2e2e;transform:scaleX(0.8677);">AdminSys FR</span>
<span class="t" style="left:358.80px;top:555.00px;font-family:'Liberation Sans', sans-serif;font-size:11.5px;color:#2e2e2e;transform:scaleX(0.9362);">Arnaud H. Tachel</span>
<span class="t" style="left:503.60px;top:555.00px;font-family:'Liberation Sans', sans-serif;font-size:11.5px;color:#2e2e2e;transform:scaleX(0.9450);">À CANDIDAT: Demande Poste</span>
<span class="t" style="left:893.50px;top:555.00px;font-family:'Liberation Sans', sans-serif;font-size:11.5px;color:#2e2e2e;transform:scaleX(0.9796);">Défaut</span>
<div class="a" style="left:9px;top:559px;width:1878px;height:1px;background:#fdfdfd;"></div>
<div class="a" style="left:7px;top:560px;width:1899px;height:1px;background:#1f87c9;"></div>
<div class="a" style="left:0px;top:561px;width:1910px;height:9px;background:#f0f0f0;"></div>
<div class="a" style="left:864px;top:399px;width:22px;height:22px;background:#e2e2e2;border:1px solid #b4b4b4;"></div>
<svg class="a" style="left:864px;top:399px;" width="22" height="22" viewBox="864 399 22 22" fill="none"><rect x="867" y="403.6" width="16.4" height="12.8" fill="#fff" stroke="#b0b0b0" stroke-width="0.9"/><path d="M866.5 401.2H875L876.5 402.6H883.7V404.2H866.5Z" fill="#3f95dd"/><path d="M878 406.5h4M878 409h4M878 411.5h4M878 414h4" stroke="#c4c4c4" stroke-width="0.9"/><circle cx="873.2" cy="410.6" r="4.3" fill="#fff" stroke="#79bff0" stroke-width="1.2"/><path d="M870.2 413.8L866.3 417.6" stroke="#5fb0ea" stroke-width="1.3"/></svg>
<div class="a" style="left:1887px;top:174px;width:17px;height:386px;background:#e6e6e6;"></div>
<div class="a" style="left:1887px;top:174px;width:17px;height:17px;background:#fdfdfd;border:1px solid #c3c3c3;"></div>
<div class="a" style="left:1887px;top:198px;width:17px;height:17px;background:#fdfdfd;border:1px solid #c3c3c3;"></div>
<div class="a" style="left:1887px;top:542px;width:17px;height:17px;background:#fdfdfd;border:1px solid #c3c3c3;"></div>
<div class="a" style="left:1887px;top:559px;width:17px;height:1px;background:#fdfdfd;"></div>
<svg class="a" style="left:1887px;top:174px;" width="17" height="17" viewBox="1887 174 17 17" fill="none"><path d="M1891.4 184.9H1900L1895.7 180.1Z" fill="#6a6a6a"/></svg>
<svg class="a" style="left:1887px;top:542px;" width="17" height="17" viewBox="1887 542 17 17" fill="none"><path d="M1891.7 548.9H1899.9L1895.8 553.9Z" fill="#6a6a6a"/></svg>
<span class="t" style="left:25.10px;top:576.70px;font-family:'Liberation Sans', sans-serif;font-size:13.6px;color:#3a3a3a;transform:scaleX(0.9323);">Pièces jointes</span>
<div class="a" style="left:112px;top:570px;width:1794px;height:41px;background:#fdfdfd;border:1px solid #dcdcdc;"></div>
<div class="a" style="left:130px;top:574px;width:245px;height:17px;background:#d0d0d0;"></div>
<svg class="a" style="left:114px;top:574px;" width="16" height="17" viewBox="114 574 16 17" fill="none"><path d="M116.5 575.5H124.5L127.5 578.5V589.5H116.5Z" fill="#fafafa" stroke="#c6c6c6" stroke-width="0.9"/><path d="M124.5 575.5V578.5H127.5" stroke="#c6c6c6" stroke-width="0.9"/><rect x="115.4" y="580" width="13" height="6.6" rx="1" fill="#e2001a"/></svg>
<span class="t" style="left:117.10px;top:580.40px;font-family:'Liberation Sans', sans-serif;font-size:5.2px;color:#fff;font-weight:bold;transform:scaleX(0.9253);">PDF</span>
<span class="t" style="left:131.30px;top:577.00px;font-family:'Liberation Sans', sans-serif;font-size:11.5px;color:#3a3a3a;transform:scaleX(0.9284);">PRIM_FACTURE_20191129120613.pdf [27.69 Ko]</span>
<div class="a" style="left:7px;top:613px;width:1899px;height:380px;background:#fff;border-top:1px solid #a0a0a0;border-left:1px solid #a0a0a0;border-right:1px solid #e8e8e8;"></div>
<div class="a" style="left:8px;top:614px;width:1897px;height:379px;background:#fff;border-top:1px solid #6a6a6a;border-left:1px solid #6a6a6a;"></div>
<div class="a" style="left:19px;top:630px;width:929px;height:121px;background:#ebf2fb;border:1px solid #1b3a5c;"></div>
<div class="a" style="left:20px;top:631px;width:154px;height:119px;background:#a9c5e5;"></div>
<div class="a" style="left:174px;top:630px;width:1px;height:121px;background:#1b3a5c;"></div>
<div class="a" style="left:19px;top:660px;width:929px;height:1px;background:#1b3a5c;"></div>
<div class="a" style="left:19px;top:690px;width:929px;height:1px;background:#1b3a5c;"></div>
<div class="a" style="left:19px;top:720px;width:929px;height:1px;background:#1b3a5c;"></div>
<span class="t" style="left:40.90px;top:637.80px;font-family:'Liberation Serif', serif;font-size:14.4px;color:#000;font-weight:bold;transform:scaleX(0.9953);">Date communication</span>
<span class="t" style="left:108.80px;top:667.80px;font-family:'Liberation Serif', serif;font-size:14.4px;color:#000;font-weight:bold;transform:scaleX(1.0112);">Émetteur</span>
<span class="t" style="left:26.10px;top:697.80px;font-family:'Liberation Serif', serif;font-size:14.4px;color:#000;font-weight:bold;transform:scaleX(0.9979);">Récepteur/Destinataire</span>
<span class="t" style="left:136.30px;top:727.80px;font-family:'Liberation Serif', serif;font-size:14.4px;color:#000;font-weight:bold;transform:scaleX(0.9849);">Sujet</span>
<span class="t" style="left:181.30px;top:667.80px;font-family:'Liberation Serif', serif;font-size:14.4px;color:#000;transform:scaleX(0.9648);">AdminSys FR</span>
<span class="t" style="left:181.30px;top:697.80px;font-family:'Liberation Serif', serif;font-size:14.4px;color:#000;transform:scaleX(0.9627);">Amélie Tremblay [m.gauthier@primlogix.com]</span>
<span class="t" style="left:181.30px;top:727.80px;font-family:'Liberation Serif', serif;font-size:14.4px;color:#000;transform:scaleX(0.9696);">TR: Att: Madame Amélie Tremblay (Division 6: Ci-Joint votre facture N°86)</span>
<div class="a" style="left:19px;top:815px;width:1858px;height:1px;background:#8c8c8c;"></div>
<div class="a" style="left:19px;top:816px;width:1858px;height:1px;background:#e6e6e6;"></div>
<span class="t" style="left:19.10px;top:825.30px;font-family:'Liberation Serif', serif;font-size:16px;color:#000;transform:scaleX(0.9746);">Date: 2019-11-29 12:06:13</span>
<span class="t" style="left:19.10px;top:844.40px;font-family:'Liberation Serif', serif;font-size:16px;color:#000;transform:scaleX(0.9328);">Sujet: Att: Madame Amélie Tremblay (Division 6: Ci-Joint votre facture N°86)</span>
<span class="t" style="left:19.10px;top:863.50px;font-family:'Liberation Serif', serif;font-size:16px;color:#000;transform:scaleX(0.9281);">De: louise.boule@devntic.com</span>
<span class="t" style="left:19.10px;top:882.60px;font-family:'Liberation Serif', serif;font-size:16px;color:#000;transform:scaleX(0.9173);">À: test@prim-logiciel.com</span>
<span class="t" style="left:19.10px;top:920.40px;font-family:'Liberation Sans', sans-serif;font-size:13.3px;color:#000;transform:scaleX(0.9782);">Bonjour Madame Amélie Tremblay pour Solutions,</span>
<span class="t" style="left:19.10px;top:947.30px;font-family:'Liberation Sans', sans-serif;font-size:13.3px;color:#000;transform:scaleX(0.9663);">En fichier joint vous trouverez la facture N° 86.</span>
<span class="t" style="left:19.10px;top:974.30px;font-family:'Liberation Sans', sans-serif;font-size:13.3px;color:#000;transform:scaleX(0.9653);">Merci de votre confiance,</span>
<div class="a" style="left:1887px;top:615px;width:18px;height:377px;background:#f0f0f0;"></div>
<svg class="a" style="left:1887px;top:628px;" width="18" height="18" viewBox="1887 628 18 18" fill="none"><path d="M1890.9 639.6L1895.7 634.2L1900.5 639.6" stroke="#5a5a5a" stroke-width="2.2"/></svg>
<div class="a" style="left:1888px;top:649px;width:15px;height:343px;background:#cdcdcd;"></div>
<div class="a" style="left:261.9px;top:152.8px;width:62px;height:62px;background:#3f93b5;border:3px solid #1b4a72;border-radius:50%;"></div>
<span class="t" style="left:279.69px;top:156.00px;font-family:'Liberation Sans', sans-serif;font-size:47.5px;color:#fff;font-weight:bold;-webkit-text-stroke:1px #fff;">1</span>
<div class="a" style="left:281px;top:193.4px;width:9.6px;height:8px;background:#3f93b5;"></div>
<div class="a" style="left:298.4px;top:193.4px;width:8.8px;height:8px;background:#3f93b5;"></div>
<div class="a" style="left:35px;top:326px;width:62px;height:62px;background:#3f93b5;border:3px solid #1b4a72;border-radius:50%;"></div>
<span class="t" style="left:52.79px;top:329.40px;font-family:'Liberation Sans', sans-serif;font-size:47.5px;color:#fff;font-weight:bold;-webkit-text-stroke:1px #fff;">2</span>
<div class="a" style="left:970px;top:658px;width:62px;height:62px;background:#3f93b5;border:3px solid #1b4a72;border-radius:50%;"></div>
<span class="t" style="left:987.79px;top:662.00px;font-family:'Liberation Sans', sans-serif;font-size:47.5px;color:#fff;font-weight:bold;-webkit-text-stroke:1px #fff;">3</span>
</body></html>
